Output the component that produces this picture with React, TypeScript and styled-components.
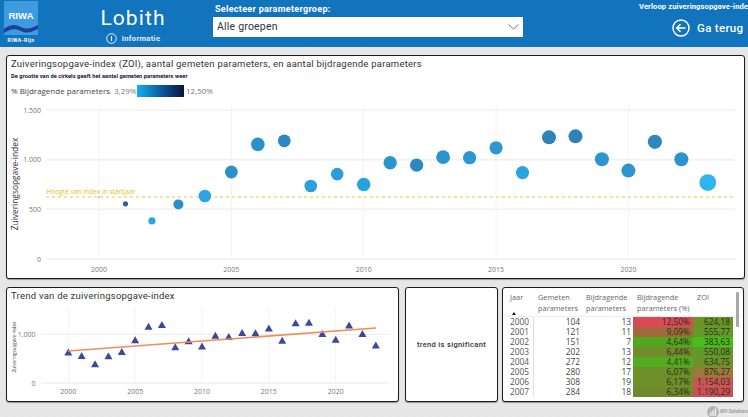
import React from 'react';
import styled, { createGlobalStyle } from 'styled-components';

const Global = createGlobalStyle`
  html, body { margin: 0; padding: 0; width: 748px; height: 417px; overflow: hidden; }
  body { font-family: "Roboto", "Liberation Sans", sans-serif; }
`;

const Page = styled.div`
  width: 748px;
  height: 417px;
  overflow: hidden;
  display: flex;
  flex-direction: column;
  background: repeating-conic-gradient(#e2e2e2 0 25%, #ebebeb 0 50%) 0 0 / 2px 2px;
`;

const Header = styled.header`
  height: 47px;
  flex: none;
  background: #1174bd;
  color: #fff;
  display: flex;
  align-items: flex-start;
  overflow: hidden;
`;

const LogoBlock = styled.div`
  width: 34px;
  margin: 1px 0 0 4px;
  flex: none;
  display: flex;
  flex-direction: column;
  align-items: center;
`;

const LogoMark = styled.div`
  width: 34px;
  height: 34px;
  background: #3f9be0;
  position: relative;
  overflow: hidden;
  text-align: center;
  font: 700 9.5px/1 "Liberation Sans", sans-serif;
  padding-top: 10px;
  box-sizing: border-box;
  letter-spacing: 0.1px;
`;

const LogoWave = styled.svg`
  position: absolute;
  left: 0;
  bottom: 0;
`;

const LogoCaption = styled.div`
  font: 700 5px/1 "Roboto", sans-serif;
  letter-spacing: 0.45px;
  margin-top: 3px;
  white-space: nowrap;
`;

const TitleBlock = styled.div`
  width: 108px;
  margin-left: 41px;
  flex: none;
  display: flex;
  flex-direction: column;
  align-items: center;
`;

const SiteTitle = styled.div`
  font: 400 21px/26px "Roboto", sans-serif;
  letter-spacing: 1.1px;
  margin-top: 5px;
`;

const InfoRow = styled.div`
  display: flex;
  align-items: center;
  gap: 5px;
  font: 700 7.5px/10px "Roboto", sans-serif;
  letter-spacing: 0.35px;
  margin-top: 2px;
  color: #e4f0f9;
`;

const PickerBlock = styled.div`
  width: 310px;
  margin-left: 26px;
  flex: none;
`;

const PickerLabel = styled.div`
  font: 700 9px/12px "Roboto", sans-serif;
  letter-spacing: 0.3px;
  margin: 3px 0 2px 2px;
`;

const Select = styled.div`
  height: 20px;
  background: #fff;
  color: #333;
  display: flex;
  align-items: center;
  justify-content: space-between;
  padding: 0 4px;
  font: 400 10.5px/20px "Roboto", sans-serif;
  letter-spacing: 0.2px;
`;

const RightBlock = styled.div`
  margin-left: 116px;
  flex: none;
  display: flex;
  flex-direction: column;
`;

const SmallLink = styled.div`
  font: 700 7.6px/10px "Roboto", sans-serif;
  letter-spacing: 0.1px;
  white-space: nowrap;
  margin-top: 2px;
`;

const BackRow = styled.div`
  display: flex;
  align-items: center;
  gap: 7px;
  margin: 7px 0 0 33px;
  font: 500 11.5px/18px "Roboto", sans-serif;
  letter-spacing: 0.3px;
  white-space: nowrap;
`;

const Content = styled.main`
  flex: none;
  display: flex;
  flex-direction: column;
  gap: 8px;
  padding: 8px 3px 0 6px;
`;

const Panel = styled.section`
  background: #fff;
  border: 1px solid #1c1c1c;
  border-radius: 3px;
  box-sizing: border-box;
  box-shadow: 0 1px 1px rgba(0, 0, 0, 0.35);
  overflow: hidden;
`;

const MainPanel = styled(Panel)`
  height: 224px;
  flex: none;
  display: flex;
  flex-direction: column;
`;

const PanelTitle = styled.h2`
  margin: 0;
  font: 400 9.5px/12px "Roboto", sans-serif;
  letter-spacing: 0.24px;
  color: #333;
  white-space: nowrap;
`;

const MainHead = styled.div`
  padding: 2px 0 0 4px;
  height: 43px;
  box-sizing: border-box;
  flex: none;
`;

const Note = styled.div`
  font: 700 5.7px/8px "Roboto", sans-serif;
  color: #101040;
  margin-top: 2px;
  letter-spacing: 0.05px;
`;

const Legend = styled.div`
  display: flex;
  align-items: center;
  margin-top: 5px;
  height: 12px;
  font: 400 8px/12px "Open Sans", sans-serif;
  color: #555;
  white-space: nowrap;
`;

const LegendName = styled.span`
  width: 103px;
  color: #444;
`;

const LegendValue = styled.span`
  width: ${(p: { $w: number }) => p.$w}px;
  color: #777;
`;

const LegendBar = styled.div`
  width: 47px;
  height: 12px;
  margin-right: 2px;
  background: linear-gradient(90deg, #12b0f0 0%, #0c5c9c 50%, #0a1540 100%);
`;

const ChartSvg = styled.svg`
  display: block;
  flex: none;
  font-family: "Open Sans", sans-serif;
`;

const BottomRow = styled.div`
  display: flex;
  height: 115px;
  flex: none;
  gap: 4px;
`;

const TrendPanel = styled(Panel)`
  width: 393px;
  flex: none;
  margin-right: 2px;
`;

const TrendHead = styled.div`
  padding: 2px 0 0 4px;
  height: 17px;
  box-sizing: border-box;
`;

const SignificantPanel = styled(Panel)`
  width: 93px;
  flex: none;
  display: flex;
  align-items: center;
  justify-content: center;
  font: 500 7.6px/12px "Roboto", sans-serif;
  letter-spacing: 0.3px;
  color: #333;
`;

const TablePanel = styled(Panel)`
  width: 242px;
  flex: none;
  position: relative;
  font: 400 8.4px/10px "Open Sans", sans-serif;
  color: #444;
`;

const GRID = '30px 47px 52px 60px 40px';

const HeadRow = styled.div`
  display: grid;
  grid-template-columns: ${GRID};
  padding-left: 1px;
  height: 28px;
  border-bottom: 1px solid #eee;
  box-sizing: content-box;
  font-size: 7.4px;
  line-height: 10.6px;
  color: #666;
`;

const HeadCell = styled.div`
  padding: 4px 0 0 ${(p: { $pad?: number }) => p.$pad ?? 6}px;
  white-space: nowrap;
  position: relative;
`;

const SortMark = styled.span`
  position: absolute;
  left: 8px;
  top: 24px;
  width: 0;
  height: 0;
  border-left: 2.5px solid transparent;
  border-right: 2.5px solid transparent;
  border-bottom: 3px solid #111;
`;

const Row = styled.div`
  display: grid;
  grid-template-columns: ${GRID};
  padding-left: 1px;
  height: 10px;
`;

const YearCell = styled.div`
  padding-left: 6px;
  border-right: 1px solid #ddd;
  color: #555;
`;

const NumCell = styled.div`
  text-align: right;
  padding-right: ${(p: { $pad?: number }) => p.$pad ?? 1}px;
  color: #444;
`;

const HeatCell = styled.div`
  text-align: right;
  padding-right: 3px;
  white-space: nowrap;
  color: #2c2c1c;
  background: ${(p: { $bg: string }) => p.$bg};
`;

const Scroll = styled.div`
  position: absolute;
  right: 4px;
  top: 4px;
  width: 3px;
  height: 35px;
  background: #a8a8a8;
  border-radius: 1px;
`;

const Footer = styled.footer`
  flex: 1;
  display: flex;
  justify-content: flex-end;
  align-items: flex-start;
  gap: 1px;
  margin-top: 4px;
  font: 700 4.6px/11px "Roboto", sans-serif;
  color: #9a9a9a;
  white-space: nowrap;
  overflow: hidden;
`;

type D = { y: number; v: number; r: number; c: string };
const data: D[] = [
  { y: 2000, v: 624, r: 0.6, c: '#444444' },
  { y: 2001, v: 556, r: 2.6, c: '#2b5f94' },
  { y: 2002, v: 384, r: 3.6, c: '#29a5e0' },
  { y: 2003, v: 550, r: 5, c: '#2c8fc8' },
  { y: 2004, v: 635, r: 6.3, c: '#2ba6e2' },
  { y: 2005, v: 876, r: 6.4, c: '#2b8fc8' },
  { y: 2006, v: 1154, r: 6.8, c: '#2b8fc8' },
  { y: 2007, v: 1190, r: 6.4, c: '#2b89c0' },
  { y: 2008, v: 735, r: 6.3, c: '#2ba0dc' },
  { y: 2009, v: 855, r: 6.3, c: '#2a9ed8' },
  { y: 2010, v: 750, r: 6.7, c: '#2aa2de' },
  { y: 2011, v: 970, r: 6.7, c: '#2b95d0' },
  { y: 2012, v: 945, r: 6.6, c: '#2b8ac2' },
  { y: 2013, v: 1025, r: 6.9, c: '#2b94ce' },
  { y: 2014, v: 1020, r: 6.6, c: '#2c97d2' },
  { y: 2015, v: 1120, r: 6.6, c: '#2c97d2' },
  { y: 2016, v: 870, r: 6.6, c: '#2aa2de' },
  { y: 2017, v: 1225, r: 7, c: '#2d82b6' },
  { y: 2018, v: 1235, r: 7, c: '#2d82b6' },
  { y: 2019, v: 1005, r: 7, c: '#2c94ce' },
  { y: 2020, v: 890, r: 7, c: '#2c94ce' },
  { y: 2021, v: 1180, r: 7.1, c: '#2d88bc' },
  { y: 2022, v: 1005, r: 7, c: '#2b94cc' },
  { y: 2023, v: 770, r: 8.4, c: '#2fb4f2' },
];

const rows: { j: string; g: string; b: string; p: string; pc: string; z: string; zc: string }[] = [
  { j: '2000', g: '104', b: '13', p: '12,50%', pc: '#d94a55', z: '624,18', zc: '#6a9428' },
  { j: '2001', g: '121', b: '11', p: '9,09%', pc: '#a06a3c', z: '555,77', zc: '#63992a' },
  { j: '2002', g: '151', b: '7', p: '4,64%', pc: '#4fa81e', z: '383,63', zc: '#48bc1a' },
  { j: '2003', g: '202', b: '13', p: '6,44%', pc: '#758a2a', z: '550,08', zc: '#63992a' },
  { j: '2004', g: '272', b: '12', p: '4,41%', pc: '#52ae20', z: '634,75', zc: '#6a9428' },
  { j: '2005', g: '280', b: '17', p: '6,07%', pc: '#6f8f28', z: '876,27', zc: '#9a7a38' },
  { j: '2006', g: '308', b: '19', p: '6,17%', pc: '#6f8f28', z: '1.154,03', zc: '#c95555' },
  { j: '2007', g: '284', b: '18', p: '6,34%', pc: '#6f8a2c', z: '1.190,29', zc: '#ce4f55' },
];

const mainX = (y: number) => 99 + (y - 2000) * 26.47;
const mainY = (v: number) => 259 - v * 0.0993;
const trendX = (y: number) => 68.3 + (y - 2000) * 13.37;
const trendY = (v: number) => 383 - v * 0.0487;

const BubbleChart = () => (
  <ChartSvg width={737} height={179} viewBox="7 99 737 179">
    {[2000, 2005, 2010, 2015, 2020].map((y) => (
      <g key={y}>
        <line x1={mainX(y)} x2={mainX(y)} y1={105} y2={260} stroke="#f3f3f3" />
        <text x={mainX(y)} y={271.5} fontSize={7} fill="#777" textAnchor="middle">{y}</text>
      </g>
    ))}
    {[0, 500, 1000, 1500].map((v) => (
      <g key={v}>
        <line x1={46} x2={735} y1={mainY(v)} y2={mainY(v)} stroke="#f0f0f0" strokeWidth={1.5} />
        <text x={41} y={mainY(v) + 2.5} fontSize={7} fill="#777" textAnchor="end">
          {v === 0 ? '0' : v.toLocaleString('de-DE')}
        </text>
      </g>
    ))}
    <text x={0} y={0} transform="translate(18 184) rotate(-90)" fontSize={8.4} fill="#333" textAnchor="middle">
      Zuiveringsopgave-index
    </text>
    <line x1={46} x2={735} y1={197} y2={197} stroke="#f6dc78" strokeWidth={1.3} strokeDasharray="3 3" />
    <text x={46.5} y={194} fontSize={6.6} fill="#e3bd2a">Hoogte van index in startjaar</text>
    {data.map((d) => (
      <circle key={d.y} cx={mainX(d.y)} cy={mainY(d.v)} r={d.r} fill={d.c} />
    ))}
  </ChartSvg>
);

const TrendChart = () => (
  <ChartSvg width={391} height={96} viewBox="7 305 391 96">
    {[2000, 2005, 2010, 2015, 2020].map((y) => (
      <g key={y}>
        <line x1={trendX(y)} x2={trendX(y)} y1={307} y2={384} stroke="#f3f3f3" />
        <text x={trendX(y)} y={394} fontSize={7} fill="#777" textAnchor="middle">{y}</text>
      </g>
    ))}
    {[0, 1000].map((v) => (
      <g key={v}>
        <line x1={41} x2={390} y1={trendY(v)} y2={trendY(v)} stroke="#f0f0f0" strokeWidth={1.3} />
        <text x={35.5} y={trendY(v) + 2.5} fontSize={7} fill="#777" textAnchor="end">
          {v === 0 ? '0' : '1.000'}
        </text>
      </g>
    ))}
    <text transform="translate(16 347) rotate(-90)" fontSize={4.6} fill="#444" textAnchor="middle">
      Zuiveringsopgave-index
    </text>
    {data.map((d) => {
      const x = trendX(d.y);
      const y = trendY(d.v);
      return <polygon key={d.y} points={`${x},${y - 4} ${x + 4},${y + 3} ${x - 4},${y + 3}`} fill="#3a4a9a" />;
    })}
    <line x1={68} y1={351} x2={376} y2={328} stroke="#f08c5a" strokeWidth={1.6} />
  </ChartSvg>
);

export default function App() {
  return (
    <Page>
      <Global />
      <Header>
        <LogoBlock>
          <LogoMark>
            RIWA
            <LogoWave width={34} height={14} viewBox="0 0 34 14">
              <path d="M0 8 C6 3 11 3 17 6 C23 9 28 7 34 4 L34 8 C28 11 23 13 17 10 C11 7 6 8 0 12 Z" fill="#1d3f9a" />
            </LogoWave>
          </LogoMark>
          <LogoCaption>RIWA-Rijn</LogoCaption>
        </LogoBlock>
        <TitleBlock>
          <SiteTitle>Lobith</SiteTitle>
          <InfoRow>
            <svg width={11} height={11} viewBox="0 0 11 11" fill="none" stroke="#fff">
              <circle cx={5.5} cy={5.5} r={4.8} strokeWidth={0.9} />
              <path d="M5.5 3v5" strokeWidth={1.1} />
            </svg>
            Informatie
          </InfoRow>
        </TitleBlock>
        <PickerBlock>
          <PickerLabel>Selecteer parametergroep:</PickerLabel>
          <Select>
            Alle groepen
            <svg width={11} height={6} viewBox="0 0 11 6" fill="none" stroke="#555" strokeWidth={0.8}>
              <path d="M0.5 0.5 L5.5 5 L10.5 0.5" />
            </svg>
          </Select>
        </PickerBlock>
        <RightBlock>
          <SmallLink>Verloop zuiveringsopgave-index</SmallLink>
          <BackRow>
            <svg width={18} height={18} viewBox="0 0 18 18" fill="none" stroke="#fff" strokeWidth={1.5}>
              <circle cx={9} cy={9} r={8} />
              <path d="M13.5 9H5M8.5 5.2 4.7 9l3.8 3.8" />
            </svg>
            Ga terug
          </BackRow>
        </RightBlock>
      </Header>
      <Content>
        <MainPanel>
          <MainHead>
            <PanelTitle>Zuiveringsopgave-index (ZOI), aantal gemeten parameters, en aantal bijdragende parameters</PanelTitle>
            <Note>De grootte van de cirkels geeft het aantal gemeten parameters weer</Note>
            <Legend>
              <LegendName>% Bijdragende parameters</LegendName>
              <LegendValue $w={23}>3,29%</LegendValue>
              <LegendBar />
              <LegendValue $w={30}>12,50%</LegendValue>
            </Legend>
          </MainHead>
          <BubbleChart />
        </MainPanel>
        <BottomRow>
          <TrendPanel>
            <TrendHead>
              <PanelTitle>Trend van de zuiveringsopgave-index</PanelTitle>
            </TrendHead>
            <TrendChart />
          </TrendPanel>
          <SignificantPanel>trend is significant</SignificantPanel>
          <TablePanel>
            <HeadRow>
              <HeadCell>Jaar<SortMark /></HeadCell>
              <HeadCell $pad={4}>Gemeten<br />parameters</HeadCell>
              <HeadCell $pad={5}>Bijdragende<br />parameters</HeadCell>
              <HeadCell $pad={4}>Bijdragende<br />parameters (%)</HeadCell>
              <HeadCell $pad={4}>ZOI</HeadCell>
            </HeadRow>
            {rows.map((r) => (
              <Row key={r.j}>
                <YearCell>{r.j}</YearCell>
                <NumCell $pad={1}>{r.g}</NumCell>
                <NumCell $pad={2}>{r.b}</NumCell>
                <HeatCell $bg={r.pc}>{r.p}</HeatCell>
                <HeatCell $bg={r.zc}>{r.z}</HeatCell>
              </Row>
            ))}
            <Scroll />
          </TablePanel>
        </BottomRow>
      </Content>
      <Footer>
        <svg width={12} height={12} viewBox="0 0 12 12">
          <circle cx={6} cy={6} r={6} fill="#b4b4b4" />
          <path d="M3 6.5h1.5V10H3zM5.3 4.5h1.5V10H5.3zM7.6 2.5h1.5V10H7.6z" fill="#eee" />
        </svg>
        KPI Solutions
      </Footer>
    </Page>
  );
}
